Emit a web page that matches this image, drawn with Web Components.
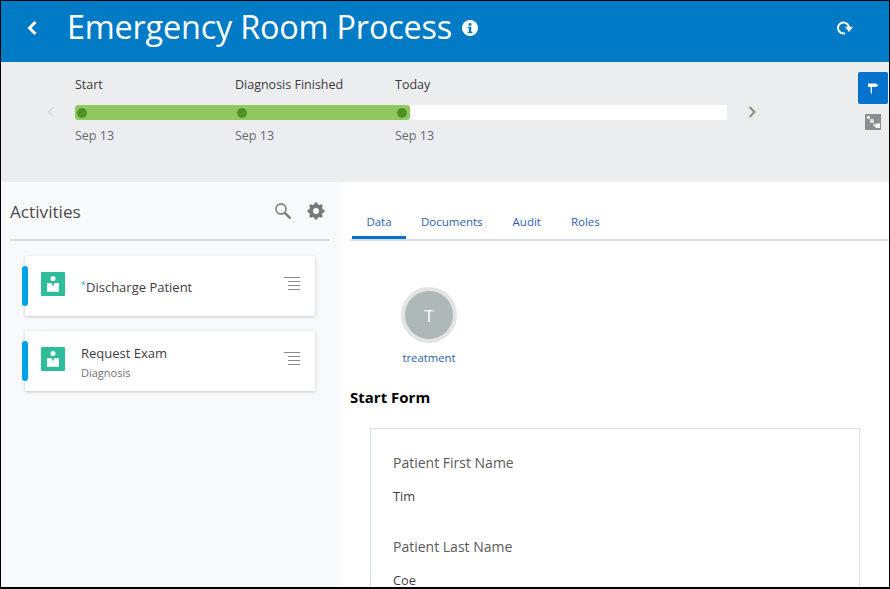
<!DOCTYPE html>
<html lang="en">
<head>
<meta charset="utf-8">
<title>Emergency Room Process</title>
<style>
  html, body { margin: 0; height: 100%; overflow: hidden; }
  body {
    box-sizing: border-box;
    height: 589px;
    border: 1px solid #000;
    border-bottom-width: 2px;
    font-family: "Open Sans", "Noto Sans", sans-serif;
    display: flex;
    flex-direction: column;
    background: #fff;
  }
</style>
</head>
<body>
<app-header>Emergency Room Process</app-header>
<time-line></time-line>
<main-area>
  <activity-panel slot="left">
    <activity-card name="Discharge Patient" required></activity-card>
    <activity-card name="Request Exam" sub="Diagnosis"></activity-card>
  </activity-panel>
  <detail-pane slot="right">
    <data-avatar letter="T">treatment</data-avatar>
    <start-form>
      <form-field label="Patient First Name">Tim</form-field>
      <form-field label="Patient Last Name">Coe</form-field>
    </start-form>
  </detail-pane>
</main-area>

<script>
// Top blue bar with back arrow, title, info and refresh
class AppHeader extends HTMLElement {
  constructor() {
    super();
    this.attachShadow({ mode: 'open' });
    this.shadowRoot.innerHTML = `
      <style>
        :host { display: flex; align-items: center; height: 61px; flex: none; box-sizing: border-box; padding-bottom: 8px; background: #027bc7; color: #fff; }
        .back { width: 66px; display: flex; justify-content: center; box-sizing: border-box; padding-right: 4px; }
        h1 { margin: -4px 0 0; font-size: 32.400px; font-weight: 400; letter-spacing: -0.2px; line-height: 52px; }
        .info { margin-left: 10px; width: 16px; height: 16px; }
        .refresh { margin-left: auto; margin-right: 36px; width: 16px; height: 14px; }
      </style>
      <div class="back">
        <svg width="12" height="16" viewBox="0 0 12 16"><path d="M9.500 2 3.500 8l6 6" fill="none" stroke="#fff" stroke-width="3"/></svg>
      </div>
      <h1><slot></slot></h1>
      <svg class="info" viewBox="0 0 16 16"><circle cx="8" cy="8" r="8" fill="#fff"/><circle cx="8" cy="4.200" r="1.500" fill="#027bc7"/><path d="M5.800 6.800h3.400v5h1.200v1.500H5.800v-1.500H7V8.300H5.800z" fill="#027bc7"/></svg>
      <svg class="refresh" viewBox="0 0 16 14"><path d="M12 7A5.500 5.500 0 1 0 8 12.300" fill="none" stroke="#fff" stroke-width="2"/><path d="M8 5.800h8l-4 5.200z" fill="#fff"/></svg>`;
  }
}

// Gray band with the milestones bar and the two view buttons
class TimeLine extends HTMLElement {
  constructor() {
    super();
    this.attachShadow({ mode: 'open' });
    const stops = [['Start', 'Sep 13'], ['Diagnosis Finished', 'Sep 13'], ['Today', 'Sep 13']];
    const labels = stops.map(s => `<span>${s[0]}</span>`).join('');
    const dates = stops.map(s => `<span>${s[1]}</span>`).join('');
    this.shadowRoot.innerHTML = `
      <style>
        :host { display: flex; height: 120px; flex: none; background: #ebedef; font-size: 12.500px; }
        .prev { width: 74px; flex: none; box-sizing: border-box; padding: 44px 20px 0 0; display: flex; justify-content: flex-end; }
        .mid { width: 652px; flex: none; padding-top: 14px; }
        .row { display: grid; grid-template-columns: 160px 160px 160px; line-height: 18px; white-space: nowrap; }
        .names { color: #3c3a40; }
        .dates { color: #6c6870; margin-top: 7px; }
        .track { height: 15px; margin-top: 11px; background: #fff; }
        .done { width: 335px; height: 15px; background: #90c85d; border-radius: 3px; display: grid; grid-template-columns: 160px 160px 15px; align-items: center; }
        .done i { display: block; width: 10px; height: 10px; margin-left: 2px; border-radius: 50%; background: #4b9225; }
        .next { width: 57px; flex: none; box-sizing: border-box; padding: 44px 0 0 21px; }
        .side { margin-left: auto; padding-top: 10px; display: flex; flex-direction: column; align-items: center; width: 30px; gap: 10px; margin-right: 1px; }
        .flag { width: 30px; height: 32px; background: #0572ce; border-radius: 2px; display: flex; align-items: center; justify-content: center; }
        svg { display: block; }
      </style>
      <div class="prev"><svg width="8" height="12" viewBox="0 0 8 12"><path d="M6.500 1 1.500 6l5 5" fill="none" stroke="#d8dadc" stroke-width="1.600"/></svg></div>
      <div class="mid">
        <div class="row names">${labels}</div>
        <div class="track"><div class="done"><i></i><i></i><i></i></div></div>
        <div class="row dates">${dates}</div>
      </div>
      <div class="next"><svg width="8" height="12" viewBox="0 0 8 12"><path d="M1.500 1l5 5-5 5" fill="none" stroke="#7b9a70" stroke-width="2"/></svg></div>
      <div class="side">
        <div class="flag"><svg width="12" height="12" viewBox="0 0 12 12"><path d="M1 1.500h8l2.500 1.800L9 5H5v6.500H3.700V5H1z" fill="#fff"/></svg></div>
        <svg width="16" height="16" viewBox="0 0 16 16"><rect width="16" height="16" fill="#8b8e90"/><rect x="2" y="2" width="3" height="3" fill="#e4e4e4"/><rect x="5" y="5" width="4" height="4" fill="#d8d8d8"/><path d="M9 9.500v2.500h2" fill="none" stroke="#fff"/><rect x="10.500" y="9.500" width="4.500" height="4.500" fill="#fff"/></svg>
      </div>`;
  }
}

class MainArea extends HTMLElement {
  constructor() {
    super();
    this.attachShadow({ mode: 'open' });
    this.shadowRoot.innerHTML = `
      <style>
        :host { display: grid; grid-template-columns: 339px 1fr; flex: 1; min-height: 0; overflow: hidden; }
      </style>
      <slot name="left"></slot>
      <slot name="right"></slot>`;
  }
}

class ActivityPanel extends HTMLElement {
  constructor() {
    super();
    this.attachShadow({ mode: 'open' });
    this.shadowRoot.innerHTML = `
      <style>
        :host { display: block; background: #f7f9fb; padding: 0 10px 0 9px; }
        .head { height: 57px; margin-bottom: 15px; border-bottom: 2px solid #d6dfe6; display: flex; align-items: center; padding-right: 5px; }
        h2 { margin: 0; font-size: 17.200px; font-weight: 400; color: #4c4a50; flex: 1; padding-top: 1px; }
        .search { margin-right: 15px; }
        .list { display: flex; flex-direction: column; gap: 15px; padding-left: 15px; padding-right: 15px; }
      </style>
      <div class="head">
        <h2>Activities</h2>
        <svg class="search" width="18" height="18" viewBox="0 0 18 18"><circle cx="7" cy="7" r="5" fill="none" stroke="#8b8b8b" stroke-width="1.800"/><path d="M10.800 10.800 16.500 16.500" stroke="#7a7a7a" stroke-width="2.400"/></svg>
        <svg width="18" height="18" viewBox="0 0 18 18"><circle cx="9" cy="9" r="5" fill="none" stroke="#77777d" stroke-width="4"/><path d="M9 .5v17M.5 9h17M3 3l12 12M15 3 3 15" stroke="#77777d" stroke-width="3"/><circle cx="9" cy="9" r="3" fill="#f7f9fb"/></svg>
      </div>
      <div class="list"><slot></slot></div>`;
  }
}

class ActivityCard extends HTMLElement {
  constructor() {
    super();
    this.attachShadow({ mode: 'open' });
    const star = this.hasAttribute('required') ? '<sup>*</sup>' : '';
    const sub = this.getAttribute('sub');
    this.shadowRoot.innerHTML = `
      <style>
        :host { display: flex; position: relative; height: 60px; background: #fff; box-shadow: 0 1px 3px rgba(0,0,0,.2); }
        .bar { position: absolute; left: -3px; top: 10px; width: 6px; height: 40px; border-radius: 3px; background: #00a3ea; }
        .icon { margin: 16px 16px 0 16px; width: 24px; height: 24px; flex: none; }
        .text { flex: 1; display: flex; flex-direction: column; justify-content: center; padding-top: 2px; font-size: 13px; color: #3f3d44; }
        .sub { font-size: 11px; color: #736f78; margin-top: 3px; line-height: 16px; }
        sup { display: inline-block; width: 5px; color: #1ea2e6; font-size: 8.500px; line-height: 0; vertical-align: 4px; }
        .name { line-height: 18px; }
        .menu { margin: 21px 15px 0 0; }
      </style>
      <span class="bar"></span>
      <svg class="icon" viewBox="0 0 24 24"><rect width="24" height="24" rx="1" fill="#2dbd9b"/><circle cx="12" cy="6.500" r="2.500" fill="#fff"/><path d="M6 11h4.500l1.500 3.500 1.500-3.500H18v8.800H6z" fill="#fff"/></svg>
      <div class="text"><span class="name">${star}${this.getAttribute('name')}</span>${sub ? `<span class="sub">${sub}</span>` : ''}</div>
      <svg class="menu" width="16" height="14" viewBox="0 0 16 14"><path d="M0 .5h16M4 4.500h12M4 8.500h12M4 12.500h12" stroke="#8a8a8a" stroke-width="1"/></svg>`;
  }
}

// Right side: tabs, the data object and the form
class DetailPane extends HTMLElement {
  constructor() {
    super();
    this.attachShadow({ mode: 'open' });
    const tabs = ['Data', 'Documents', 'Audit', 'Roles'].map((t, i) => `<a class="${i === 0 ? 'on' : ''}">${t}</a>`).join('');
    this.shadowRoot.innerHTML = `
      <style>
        :host { display: block; padding: 0 0 0 10px; background: #fff; }
        .tabs { display: flex; margin-top: 28px; border-bottom: 2px solid #d6dfe6; height: 29px; font-size: 11.500px; color: #2c5fb5; padding-left: 2px; }
        a { padding: 0 15px; line-height: 24px; height: 29px; box-sizing: border-box; }
        a.on { border-bottom: 3px solid #0572ce; width: 54px; text-align: center; padding: 0; }
      </style>
      <div class="tabs">${tabs}</div>
      <slot></slot>`;
  }
}

class DataAvatar extends HTMLElement {
  constructor() {
    super();
    this.attachShadow({ mode: 'open' });
    this.shadowRoot.innerHTML = `
      <style>
        :host { display: flex; flex-direction: column; align-items: center; width: 100px; margin: 46px 0 0 29px; }
        .c { width: 48px; height: 48px; border: 4px solid #e3e3e3; border-radius: 50%; background: #aeb8b8; color: #fff; font-size: 17px; display: flex; align-items: center; justify-content: center; }
        .t { font-size: 11.300px; color: #2c5fb5; margin-top: 7px; line-height: 16px; }
      </style>
      <div class="c">${this.getAttribute('letter')}</div>
      <div class="t"><slot></slot></div>`;
  }
}

class StartForm extends HTMLElement {
  constructor() {
    super();
    this.attachShadow({ mode: 'open' });
    this.shadowRoot.innerHTML = `
      <style>
        :host { display: block; }
        h3 { margin: 21px 0 21px; font-size: 15px; line-height: 20px; font-weight: 700; color: #000; }
        .box { margin: 0 29px 0 20px; border: 1px solid #d6e1ea; padding: 24px 22px 0; }
      </style>
      <h3>Start Form</h3>
      <div class="box"><slot></slot></div>`;
  }
}

class FormField extends HTMLElement {
  constructor() {
    super();
    this.attachShadow({ mode: 'open' });
    this.shadowRoot.innerHTML = `
      <style>
        :host { display: block; height: 84px; }
        label { display: block; font-size: 14px; line-height: 20px; color: #5a5a5a; }
        div { font-size: 12.800px; line-height: 14px; margin-top: 16px; color: #3f3d44; }
      </style>
      <label>${this.getAttribute('label')}</label>
      <div><slot></slot></div>`;
  }
}

customElements.define('app-header', AppHeader);
customElements.define('time-line', TimeLine);
customElements.define('main-area', MainArea);
customElements.define('activity-panel', ActivityPanel);
customElements.define('activity-card', ActivityCard);
customElements.define('detail-pane', DetailPane);
customElements.define('data-avatar', DataAvatar);
customElements.define('start-form', StartForm);
customElements.define('form-field', FormField);
</script>
</body>
</html>
